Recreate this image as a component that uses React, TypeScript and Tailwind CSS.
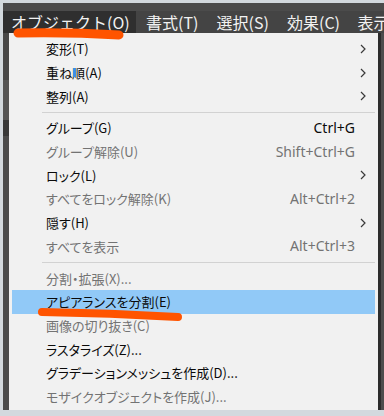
import React from "react";

type Item =
  | { sep: true }
  | { sep?: false; label: string; key?: string; disabled?: boolean; sub?: boolean; active?: boolean; cursor?: boolean };

const ITEMS: Item[] = [
  { label: "変形(T)", sub: true },
  { label: "重ね順(A)", sub: true, cursor: true },
  { label: "整列(A)", sub: true },
  { sep: true },
  { label: "グループ(G)", key: "Ctrl+G" },
  { label: "グループ解除(U)", key: "Shift+Ctrl+G", disabled: true },
  { label: "ロック(L)", sub: true },
  { label: "すべてをロック解除(K)", key: "Alt+Ctrl+2", disabled: true },
  { label: "隠す(H)", sub: true },
  { label: "すべてを表示", key: "Alt+Ctrl+3", disabled: true },
  { sep: true },
  { label: "分割・拡張(X)...", disabled: true },
  { label: "アピアランスを分割(E)", active: true },
  { label: "画像の切り抜き(C)", disabled: true },
  { label: "ラスタライズ(Z)..." },
  { label: "グラデーションメッシュを作成(D)..." },
  { label: "モザイクオブジェクトを作成(J)...", disabled: true },
];

const MENUS = ["書式(T)", "選択(S)", "効果(C)", "表示(V)"];

function Chevron() {
  return (
    <svg width="6" height="10" viewBox="0 0 6 10" className="block">
      <polyline points="1,1 5,5 1,9" fill="none" stroke="#3a3a3a" strokeWidth="1.2" />
    </svg>
  );
}

export default function App() {
  const jp = "font-['Noto_Sans_CJK_JP','Noto_Sans',sans-serif]";
  return (
    <div className="relative w-[384px] h-[416px] overflow-hidden bg-[#d3d9de] pl-[3px] pt-[3px] pb-[6px] flex flex-col">
      {/* app chrome */}
      <div className="h-[8px] bg-[#4b4b4b]" />
      <div className={`h-[22px] bg-[#444444] flex items-center whitespace-nowrap text-[16px] text-[#f2f2f2] ${jp}`}>
        <div className="w-[7px] h-full bg-[#3d3d3d]" />
        <div className="h-full w-[133px] shrink-0 bg-[#2f2f2f] flex items-center pl-[8px]">オブジェクト(O)</div>
        {MENUS.map((m) => (
          <div key={m} className="w-[70.5px] shrink-0 pl-[10px] flex items-center">{m}</div>
        ))}
      </div>

      <div className="flex flex-1 min-h-0">
        {/* left tool strip */}
        <div className="w-[6px] flex flex-col bg-[#4a4a4a]">
          <div className="h-[47px] bg-[#474747]" />
          <div className="h-[40px] bg-[#555555]" />
          <div className="h-[16px] bg-[#393939]" />
          <div className="flex-1 bg-[#4b4b4b]" />
        </div>

        {/* menu panel */}
        <div className={`w-[369px] bg-[#f1f1f1] px-[3px] pt-[4px] ${jp} [font-feature-settings:'palt'] text-[13px]`}>
          {ITEMS.map((it, i) =>
            it.sep ? (
              <div key={i} className="h-[8px] flex items-center pl-[30px]">
                <div className="h-px w-full bg-[#d2d2d2]" />
              </div>
            ) : (
              <div
                key={i}
                className={`relative h-[23.7px] flex items-center pl-[34px] pr-[9px] whitespace-nowrap ${
                  it.active ? "bg-[#91c9f7]" : ""
                } ${it.disabled ? "text-[#737373]" : "text-[#0a0a0a]"}`}
              >
                <span className="flex-1 leading-none">{it.label}</span>
                {it.key && (
                  <span className="font-['Noto_Sans',sans-serif] text-[14px] leading-none">{it.key}</span>
                )}
                <span className="w-[11px] flex justify-end">{it.sub && <Chevron />}</span>
                {it.cursor && <span className="absolute left-[61px] top-[7px] w-[3px] h-[9px] bg-[#3d8fe6]" />}
              </div>
            )
          )}
        </div>

        {/* right edge */}
        <div className="flex-1 flex">
          <div className="w-[3px] bg-[#2c2c2c]" />
          <div className="flex-1 bg-[#4d4d4d]" />
        </div>
      </div>

      {/* hand-drawn marker strokes */}
      <svg className="absolute left-0 top-0 pointer-events-none" width="384" height="416" viewBox="0 0 384 416">
        <path d="M18 33 Q70 32 119 35" fill="none" stroke="#ff5400" strokeWidth="9" strokeLinecap="round" />
        <path d="M42 312 Q110 313 178 317" fill="none" stroke="#ff5400" strokeWidth="8" strokeLinecap="round" />
      </svg>
    </div>
  );
}
